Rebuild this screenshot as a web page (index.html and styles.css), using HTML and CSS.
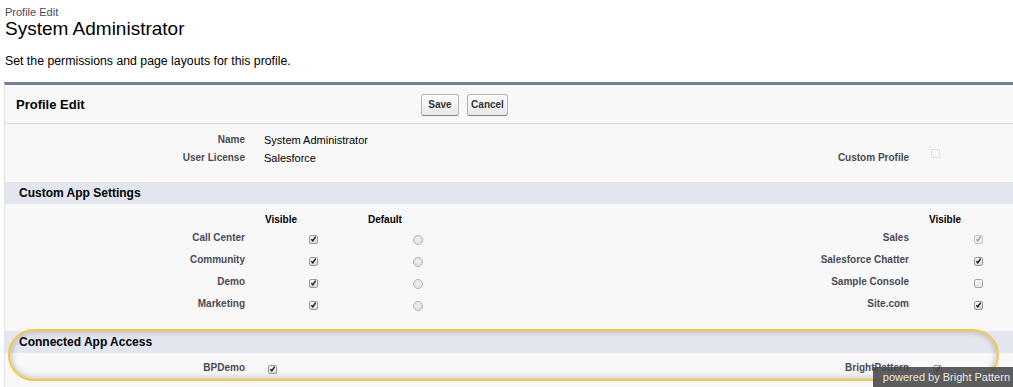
FILE: index.html
```html
<!DOCTYPE html>
<html>
<head>
<meta charset="utf-8">
<link rel="stylesheet" href="styles.css">
</head>
<body>
<div class="page-head">
  <div class="page-type">Profile Edit</div>
  <h1 class="page-title">System Administrator</h1>
  <p class="page-desc">Set the permissions and page layouts for this profile.</p>
</div>

<div class="panel">
  <div class="panel-head">
    <h2 class="panel-title">Profile Edit</h2>
    <div class="btns">
      <button class="btn btn-save">Save</button>
      <button class="btn btn-cancel">Cancel</button>
    </div>
  </div>

  <div class="section info">
    <div class="grid">
      <div class="lbl">Name</div>
      <div class="val span2">System Administrator</div>
      <div class="lbl"></div>
      <div class="val"></div>

      <div class="lbl">User License</div>
      <div class="val span2">Salesforce</div>
      <div class="lbl">Custom Profile</div>
      <div class="val cp"><span class="cb empty dotted"></span></div>
    </div>
  </div>

  <div class="sec-head">Custom App Settings</div>
  <div class="section apps">
    <div class="grid">
      <div class="lbl"></div>
      <div class="th">Visible</div>
      <div class="th">Default</div>
      <div class="lbl"></div>
      <div class="th">Visible</div>

      <div class="lbl row">Call Center</div>
      <div class="val row"><span class="cb on"></span></div>
      <div class="val row"><span class="rd"></span></div>
      <div class="lbl row">Sales</div>
      <div class="val row"><span class="cb on disabled"></span></div>

      <div class="lbl row">Community</div>
      <div class="val row"><span class="cb on"></span></div>
      <div class="val row"><span class="rd"></span></div>
      <div class="lbl row">Salesforce Chatter</div>
      <div class="val row"><span class="cb on"></span></div>

      <div class="lbl row">Demo</div>
      <div class="val row"><span class="cb on"></span></div>
      <div class="val row"><span class="rd"></span></div>
      <div class="lbl row">Sample Console</div>
      <div class="val row"><span class="cb empty"></span></div>

      <div class="lbl row">Marketing</div>
      <div class="val row"><span class="cb on"></span></div>
      <div class="val row"><span class="rd"></span></div>
      <div class="lbl row">Site.com</div>
      <div class="val row"><span class="cb on"></span></div>
    </div>
  </div>

  <div class="sec-head">Connected App Access</div>
  <div class="section conn">
    <div class="grid">
      <div class="lbl row">BPDemo</div>
      <div class="val row span2 bp"><span class="cb on"></span></div>
      <div class="lbl row">BrightPattern</div>
      <div class="val row bp2"><span class="cb on"></span></div>
    </div>
  </div>
</div>

<div class="highlight"></div>
<div class="badge">powered by Bright Pattern</div>
</body>
</html>
```

FILE: styles.css
```css
html, body {
  margin: 0;
  padding: 0;
  background: #fff;
  overflow: hidden;
}
body {
  font-family: "Liberation Sans", Arial, sans-serif;
  color: #000;
  width: 1013px;
  height: 387px;
  position: relative;
}
.page-head {
  padding: 6px 5px 0 5px;
  box-sizing: border-box;
  height: 82px;
}
.page-type {
  font-size: 11px;
  color: #4a4a56;
  line-height: 13px;
}
.page-title {
  font-size: 19px;
  font-weight: normal;
  margin: 0;
  line-height: 20px;
  color: #000;
}
.page-desc {
  font-size: 12.3px;
  margin: 15px 0 0 0;
  line-height: 14px;
  color: #000;
}
.panel {
  margin-left: 4px;
  border-top: 3px solid #747e96;
  border-left: 1px solid #e0e3e5;
  background: #f8f8f8;
  height: 320px;
}
.panel-head {
  display: flex;
  align-items: center;
  height: 38px;
  border-bottom: 1px solid #dbdbdb;
}
.panel-title {
  margin: 0;
  font-size: 13px;
  font-weight: bold;
  padding-left: 11px;
  width: 405px;
  color: #000;
}
.btns {
  display: flex;
  gap: 8px;
  padding-top: 1px;
}
.btn {
  font-family: "Liberation Sans", Arial, sans-serif;
  font-size: 10px;
  font-weight: bold;
  color: #333;
  height: 22px;
  padding: 0;
  border: 1px solid #b5b5b5;
  border-bottom-color: #7f7f7f;
  border-radius: 3px;
  background: linear-gradient(#ffffff, #e8e8e8);
  text-align: center;
}
.btn-save {
  width: 38px;
}
.btn-cancel {
  width: 41px;
}
.grid {
  display: grid;
  grid-template-columns: 240px 123px 100px 1fr 104px;
}
.lbl {
  text-align: right;
  font-size: 10px;
  font-weight: bold;
  color: #4a4a56;
  line-height: 18px;
}
.val {
  font-size: 11px;
  line-height: 18px;
  padding-left: 19px;
}
.span2 {
  grid-column: span 2;
}
.section.info {
  padding: 7px 0 15px 0;
}
.info .cp {
  padding-left: 22px;
}
.sec-head {
  background: #e3e6ee;
  height: 22px;
  line-height: 22px;
  font-size: 12px;
  font-weight: bold;
  padding-left: 14px;
  color: #000;
}
.section.apps {
  padding: 8px 0 15px 0;
}
.th {
  font-size: 10px;
  font-weight: bold;
  line-height: 16px;
  padding-left: 20px;
}
.apps .th:nth-child(3) {
  padding-left: 0;
}
.apps .th:nth-child(5) {
  padding-left: 20px;
}
.row {
  height: 22px;
}
.lbl.row {
  line-height: 12px;
  padding-top: 4px;
  height: 18px;
}
.apps .val {
  padding-left: 64px;
}
.apps .val:nth-child(5n+3) {
  padding-left: 45px;
}
.apps .val:nth-child(5n) {
  padding-left: 65px;
}
.val.row {
  padding-top: 7px;
  height: 15px;
  line-height: 0;
}
.cb, .rd {
  display: inline-block;
  width: 9px;
  height: 9px;
  box-sizing: border-box;
  vertical-align: top;
}
.cb {
  border: 1px solid #9a9a9a;
  border-radius: 2px;
  background: linear-gradient(#f4f4f4, #dcdcdc);
  position: relative;
}
.cb.on::after {
  content: "";
  position: absolute;
  left: 1px;
  top: 0px;
  width: 5px;
  height: 6px;
  background: no-repeat center / contain url("data:image/svg+xml;utf8,<svg xmlns='http://www.w3.org/2000/svg' viewBox='0 0 5 6'><path d='M0.3 3.2 L1.8 4.8 L4.7 0.6' fill='none' stroke='%23222' stroke-width='1.5'/></svg>");
}
.cb.disabled {
  border-color: #c8c8c8;
  background: #eeeeee;
}
.cb.disabled::after {
  opacity: 0.35;
}
.cb.empty {
  background: linear-gradient(#f6f6f6, #e2e2e2);
  border-color: #a8a8a8;
}
.cb.dotted {
  border: 1px dotted #c8c8c8;
  background: #f8f8f8;
}
.rd {
  width: 10px;
  height: 10px;
  border-radius: 50%;
  border: 1px solid #b4b4b4;
  background: radial-gradient(circle at 50% 40%, #f0f0f0, #dcdcdc);
}
.section.conn {
  padding: 5px 0 0 0;
}
.conn .val.bp {
  padding-left: 23px;
}
.conn .val.bp2 {
  padding-left: 24px;
}
.highlight {
  position: absolute;
  left: 8px;
  top: 329px;
  width: 991px;
  height: 52px;
  box-sizing: border-box;
  border: 2px solid #f6c744;
  border-radius: 26px;
  box-shadow: inset 0 0 5px 2px rgba(120, 120, 130, 0.35);
}
.badge {
  position: absolute;
  right: 0;
  bottom: 0;
  width: 140px;
  height: 20px;
  background: rgba(75, 75, 75, 0.9);
  color: #eaeaea;
  font-size: 11px;
  line-height: 21px;
  text-align: right;
  padding-right: 3px;
  box-sizing: border-box;
  white-space: nowrap;
}
```
